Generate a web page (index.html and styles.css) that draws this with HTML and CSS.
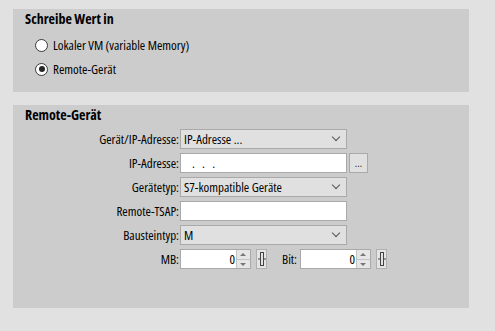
FILE: index.html
```html
<!DOCTYPE html>
<html lang="de">
<head>
  <meta charset="UTF-8" />
  <title>Schreibe Wert in</title>
  <link rel="stylesheet" href="styles.css">
</head>
<body>
  <div class="page">
    <section class="panel panel-target">
      <h2>Schreibe Wert in</h2>
      <label class="radio"><span class="dot"></span>Lokaler VM (variable Memory)</label>
      <label class="radio"><span class="dot checked"></span>Remote-Gerät</label>
    </section>

    <section class="panel panel-remote">
      <h2>Remote-Gerät</h2>
      <div class="form">
        <span class="lbl">Gerät/IP-Adresse:</span>
        <div class="field"><div class="select">IP-Adresse ...<span class="chev"></span></div></div>

        <span class="lbl">IP-Adresse:</span>
        <div class="field"><div class="input ip">.&nbsp;&nbsp;&nbsp;.&nbsp;&nbsp;&nbsp;.</div><button class="more">...</button></div>

        <span class="lbl">Gerätetyp:</span>
        <div class="field"><div class="select">S7-kompatible Geräte<span class="chev"></span></div></div>

        <span class="lbl">Remote-TSAP:</span>
        <div class="field"><div class="input"></div></div>

        <span class="lbl">Bausteintyp:</span>
        <div class="field"><div class="select">M<span class="chev"></span></div></div>

        <span class="lbl">MB:</span>
        <div class="field">
          <div class="spin"><span class="num">0</span><span class="arrows"><i class="up"></i><i class="down"></i></span></div>
          <button class="pick"><svg width="8" height="16" viewBox="0 0 8 16"><rect x="2.5" y="1.5" width="3" height="13" fill="none" stroke="#444"/><path d="M0 8h2.5M5.5 8H8" stroke="#444"/></svg></button>
          <span class="lbl bit">Bit:</span>
          <div class="spin"><span class="num">0</span><span class="arrows"><i class="up"></i><i class="down"></i></span></div>
          <button class="pick"><svg width="8" height="16" viewBox="0 0 8 16"><rect x="2.5" y="1.5" width="3" height="13" fill="none" stroke="#444"/><path d="M0 8h2.5M5.5 8H8" stroke="#444"/></svg></button>
        </div>
      </div>
    </section>
  </div>
</body>
</html>
```

FILE: styles.css
```css
body {
  margin: 0;
  background: #e1e1e1;
  font-family: "Open Sans", "Liberation Sans", Arial, sans-serif;
  font-stretch: 80%;
  font-size: 13px;
  color: #000;
}
.page {
  padding: 9px 26px 0 13px;
}
.panel {
  background: #cccccc;
  padding: 0 12px;
}
.panel h2 {
  margin: 0;
  font-size: 14px;
  font-stretch: 84%;
  font-weight: bold;
  line-height: 16px;
}
.panel-target {
  height: 83px;
  padding-top: 2px;
  box-sizing: border-box;
}
.panel-target h2 {
  margin-bottom: 6px;
}
.radio {
  display: flex;
  align-items: center;
  gap: 5px;
  height: 24px;
  padding-left: 10px;
}
.dot {
  width: 11px;
  height: 11px;
  border: 1px solid #3a3a3a;
  border-radius: 50%;
  background: #fff;
  position: relative;
}
.dot.checked::after {
  content: "";
  position: absolute;
  left: 2.5px;
  top: 2.5px;
  width: 6px;
  height: 6px;
  border-radius: 50%;
  background: #262626;
}
.panel-remote {
  margin-top: 13px;
  height: 203px;
  padding-top: 2px;
  box-sizing: border-box;
}
.panel-remote h2 {
  margin-bottom: 6px;
}
.form {
  display: grid;
  grid-template-columns: 155px auto;
  row-gap: 4px;
  align-items: center;
}
.lbl {
  text-align: right;
  padding-right: 1px;
}
.field {
  display: flex;
  align-items: center;
  gap: 2px;
}
.select, .input {
  box-sizing: border-box;
  width: 167px;
  height: 20px;
  border: 1px solid #a9a9a9;
  line-height: 18px;
  padding-left: 3px;
}
.select {
  background: #e0e0e0;
  position: relative;
}
.chev {
  position: absolute;
  right: 7px;
  top: 4px;
  width: 5px;
  height: 5px;
  border-right: 1px solid #555;
  border-bottom: 1px solid #555;
  transform: rotate(45deg);
}
.input {
  background: #fff;
}
.input.ip {
  padding-left: 11px;
}
.more {
  box-sizing: border-box;
  width: 19px;
  height: 20px;
  border: 1px solid #a9a9a9;
  background: #e0e0e0;
  font: inherit;
  font-size: 11px;
  line-height: 14px;
  padding: 0;
  color: #222;
}
.spin {
  display: flex;
  box-sizing: border-box;
  width: 71px;
  height: 20px;
  border: 1px solid #a9a9a9;
  background: #fff;
}
.num {
  flex: 1;
  text-align: right;
  line-height: 18px;
  padding-right: 1px;
}
.arrows {
  width: 13px;
  display: flex;
  flex-direction: column;
  border-left: 1px solid #c4c4c4;
  background: #e6e6e6;
}
.arrows i {
  flex: 1;
  position: relative;
}
.arrows i.up {
  border-bottom: 1px solid #c4c4c4;
}
.arrows i::after {
  content: "";
  position: absolute;
  left: 3px;
  top: 3px;
  border-left: 3px solid transparent;
  border-right: 3px solid transparent;
}
.arrows i.up::after {
  border-bottom: 3px solid #777;
}
.arrows i.down::after {
  border-top: 3px solid #777;
}
.pick {
  box-sizing: border-box;
  width: 11px;
  height: 20px;
  margin-left: 3px;
  padding: 0;
  border: 1px solid #b0b0b0;
  background: #e4e4e4;
  display: flex;
  align-items: center;
  justify-content: center;
}
.lbl.bit {
  margin-left: 13px;
}
```
